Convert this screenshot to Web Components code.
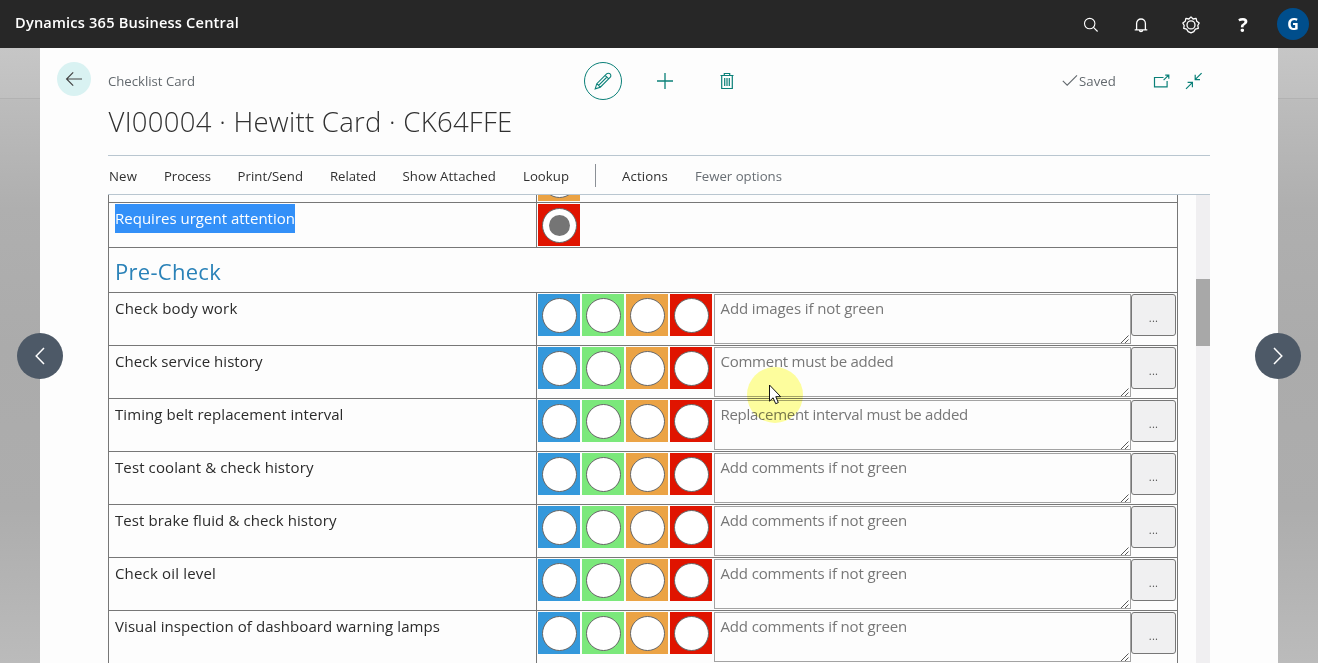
<!DOCTYPE html>
<html lang="en">
<head>
<meta charset="utf-8">
<title>Dynamics 365 Business Central</title>
<style>
html,body{margin:0;height:100%;overflow:hidden}
body{font-family:"Open Sans","Noto Sans",sans-serif;background:#b0b0b0}
</style>
</head>
<body>
<bc-app></bc-app>
<script>
class Base extends HTMLElement {
  constructor(){ super(); this.attachShadow({mode:'open'}); }
  connectedCallback(){ this.shadowRoot.innerHTML = this.render(); if(this.after) this.after(); }
}
/* Single-line label whose tracking is adjusted to fill the given width. */
customElements.define('bc-text', class extends Base {
  render(){ return `<style>:host{display:block;flex:none;white-space:nowrap;width:${this.getAttribute('w')}px}span{display:inline-block}</style><span><slot></slot></span>`; }
  after(){
    const s = this.shadowRoot.querySelector('span'), n = this.textContent.length;
    const gap = (+this.getAttribute('w') - s.getBoundingClientRect().width) / n;
    s.style.letterSpacing = gap.toFixed(3) + 'px';
  }
});
const ICONS = {
  search:[16,16,'<circle cx="6.7" cy="6.6" r="5.2"/><path d="M10.5 10.4 14.6 14.5"/>'],
  bell:[14,16,'<path d="M2.6 12.6V6.4a4.4 4.4 0 0 1 8.8 0v6.2M.7 12.8h12.6M5.4 13a1.6 1.6 0 0 0 3.2 0" stroke-width="1.3"/>'],
  gear:[18,18,'<path d="M9 .9 11.1 3 14.1 2.4 14.8 5.3 17.2 7 15.8 9.5 16.3 12.4 13.4 13.1 11.8 15.6 9 16.9 6.2 15.6 4.6 13.1 1.7 12.4 2.2 9.5.8 7 3.2 5.3 3.9 2.4 6.9 3Z" stroke-linejoin="round" stroke-width="1.3"/><circle cx="9" cy="8.9" r="4" stroke-width="1.3"/>'],
  back:[18,16,'<path d="M17 8H1.6M8.2 1.4 1.6 8l6.6 6.6" stroke-width="1.2"/>'],
  pencil:[18,18,'<path d="M1.2 16.8 2.8 11.7 12.6 1.9a2.1 2.1 0 0 1 3.5 3.5L6.3 15.2Z M2.8 11.7l3.5 3.5M11.2 3.3l3.5 3.5M4.6 13.4l8.4-8.4" stroke-width="1.1"/>'],
  plus:[18,18,'<path d="M9 1v16M1 9h16" stroke-width="1.3"/>'],
  trash:[14,18,'<path d="M.5 3.5h13M4.3 3.3V1.5h5.4v1.8M1.7 3.7v12.8h10.6V3.7M4.7 6v8M7 6v8M9.3 6v8" stroke-width="1.2"/>'],
  check:[16,13,'<path d="M.8 6.8 5.2 11.2 15 1.4"/>'],
  popout:[18,14,'<path d="M10.5 3.5H1.5v9.3h12.6V7M10.6 6.2 15.6 1.2M12.2 1.2h3.6V4.8" stroke-width="1.2"/>'],
  shrink:[18,18,'<path d="M16.6 1.2 10.6 7.2M10.2 2.8v4.8H15M1 16.8l6-6M2.6 10.4h4.8v4.8" stroke-width="1.2"/>'],
  left:[10,18,'<path d="M9 1 1.2 9 9 17" stroke-width="1.5"/>'],
  right:[10,18,'<path d="M1 1 8.8 9 1 17" stroke-width="1.5"/>'],
  grip:[10,10,'<path d="M1 9 8.5 1.5M5 9 8.5 5.5" stroke-width=".9"/>']
};
customElements.define('bc-icon', class extends Base {
  render(){ const [w,h,p] = ICONS[this.getAttribute('name')];
    return `<style>:host{display:block;flex:none;width:${w}px;height:${h}px}svg{display:block}</style><svg width="${w}" height="${h}" viewBox="0 0 ${w} ${h}" fill="none" stroke="currentColor" stroke-width="1.1">${p}</svg>`; }
});
customElements.define('bc-topbar', class extends Base {
  render(){ return `<style>
    :host{display:flex;height:48px;background:#272727;color:#fff;box-sizing:border-box;padding:0 9px 0 15px}
    .t{font-weight:600;font-size:14.6px;line-height:20px;padding-top:12px;flex:1}
    .i{display:flex;align-items:center;height:50px}
    .q{font-weight:700;font-size:20px;line-height:26px;margin:0 28px 0 37px;width:12px;text-align:center}
    .a{width:32px;height:32px;border-radius:50%;background:#004e8c;font-weight:700;font-size:16px;line-height:32px;text-align:center;margin-top:-2px}
    </style><div class="t"><bc-text w="224">Dynamics 365 Business Central</bc-text></div>
    <div class="i"><bc-icon name="search" style="margin-right:35px"></bc-icon><bc-icon name="bell" style="margin-right:34px"></bc-icon><bc-icon name="gear"></bc-icon><div class="q">?</div><div class="a">G</div></div>`; }
});
customElements.define('bc-caption', class extends Base {
  render(){ return `<style>
    :host{display:flex;height:56px;color:#0a8078;align-items:flex-start}
    .b{width:34px;height:34px;border-radius:50%;background:#d9f2f2;color:#444;display:grid;place-items:center;margin:14px 17px 0 17px}
    .c{font-size:13.2px;line-height:20px;color:#63696e;margin:23px 389px 0 0}
    .e{width:36px;height:36px;border:1px solid #0a8078;border-radius:50%;display:grid;place-items:center;margin:14px 34px 0 0}
    .s{display:flex;font-size:13.2px;line-height:20px;color:#63696e;margin:23px 37px 0 0}
    </style>
    <div class="b"><bc-icon name="back"></bc-icon></div>
    <div class="c"><bc-text w="87">Checklist Card</bc-text></div>
    <div class="e"><bc-icon name="pencil"></bc-icon></div>
    <bc-icon name="plus" style="margin:24px 46px 0 0"></bc-icon>
    <bc-icon name="trash" style="margin:24px 328px 0 0"></bc-icon>
    <div class="s"><bc-icon name="check" style="margin:3px 1px 0 0"></bc-icon><bc-text w="37">Saved</bc-text></div>
    <bc-icon name="popout" style="margin:26px 14px 0 0"></bc-icon>
    <bc-icon name="shrink" style="margin:24px 0 0"></bc-icon>`; }
});
customElements.define('bc-actions', class extends Base {
  render(){
    const a=[['New',28,27],['Process',47,26.5],['Print/Send',65.5,27],['Related',46,26.5],['Show Attached',93.5,27],['Lookup',46,26]];
    return `<style>:host{display:flex;align-items:center;height:37px;padding-top:1px;padding-left:1px;border:solid #b9c6d0;border-width:1px 0;font-size:13.2px;color:#303030;line-height:20px}
    i{width:1px;height:23px;background:#8b9096;margin-right:26px;margin-top:-1px}.f{color:#686e74}</style>`+
    a.map(([t,w,m])=>`<bc-text w="${w}" style="margin-right:${m}px">${t}</bc-text>`).join('')+
    `<i></i><bc-text w="46" style="margin-right:27px">Actions</bc-text><bc-text class="f" w="87">Fewer options</bc-text>`; }
});
customElements.define('bc-choice', class extends Base {
  render(){ return `<style>:host{display:block;flex:none;box-sizing:border-box;width:42px;height:42px;padding:4px 0 0 4px;background:${this.getAttribute('color')}}
    div{box-sizing:border-box;width:35px;height:35px;border:1px solid #666;border-radius:50%;background:#fff;display:grid;place-items:center}
    b{width:21px;height:21px;border-radius:50%;background:#757575}</style><div>${this.hasAttribute('checked')?'<b></b>':''}</div>`; }
});
customElements.define('bc-note', class extends Base {
  render(){ return `<style>:host{display:block;flex:none;position:relative;box-sizing:border-box;width:417px;height:50px;border:1px solid #a3a3a3;font-size:15px;line-height:22px;color:#777;padding:2px 0 0 5.5px;background:#fdfdfd}
    bc-icon{position:absolute;right:0;bottom:-1px;color:#444}</style><slot></slot><bc-icon name="grip"></bc-icon>`; }
});
customElements.define('bc-more', class extends Base {
  render(){ return `<style>:host{display:block;flex:none;box-sizing:border-box;width:45px;height:42px;border:1px solid #777;border-radius:3px;background:#f0f0f1;color:#555;font-size:11px;line-height:46px;text-align:center;letter-spacing:.3px}</style>...`; }
});
customElements.define('bc-row', class extends Base {
  render(){ return `<style>:host{display:flex;box-sizing:border-box;height:${this.getAttribute('h')}px;border-top:1px solid #777}
    .l{box-sizing:border-box;width:428px;padding:4px 0 0 6px;border-right:1px solid #777;font-size:15px;line-height:22px;color:#2b2b2b;flex:none}
    .r{display:flex;gap:2px;padding:1px 0 0 1px;align-items:flex-start}</style>
    <div class="l"><slot name="label"></slot></div><div class="r"><slot></slot></div>`; }
});
customElements.define('bc-section', class extends Base {
  render(){ return `<style>:host{display:block;box-sizing:border-box;height:45px;border-top:1px solid #777;padding:7px 0 0 6px;font-size:22px;line-height:32px;color:#2a82b8}</style><slot></slot>`; }
});
customElements.define('bc-checklist', class extends Base {
  render(){
    const rows=[['Check body work',122.5,'Add images if not green',163.5],['Check service history',147.5,'Comment must be added',173],
     ['Timing belt replacement interval',228.5,'Replacement interval must be added',247.5],['Test coolant &amp; check history',198.5,'Add comments if not green',186.5],
     ['Test brake fluid &amp; check history',221.5,'Add comments if not green',186.5],['Check oil level',101,'Add comments if not green',186.5],
     ['Visual inspection of dashboard warning lamps',325,'Add comments if not green',186.5]];
    const c=['#3498db','#7be87b','#eba345','#e01400'].map(x=>`<bc-choice color="${x}"></bc-choice>`).join('');
    return `<style>:host{display:flex;height:469px;overflow:hidden}
     .t{box-sizing:border-box;width:1070px;border:solid #777;border-width:0 1px;margin-top:-38px;flex:none;height:520px}
     .s{margin-left:18px;width:14px;background:#f0eff1;padding-top:84px;box-sizing:border-box}
     .s div{height:67px;background:#a8a8a8}
     .sel{background:#3390f8;color:#fff;line-height:29px;margin-top:-3px;font-weight:500}
     .g{display:flex}
    </style><div class="t">
     <bc-row h="45"><bc-choice color="#eba345"></bc-choice></bc-row>
     <bc-row h="45"><bc-text slot="label" class="sel" w="180">Requires urgent attention</bc-text><bc-choice color="#e01400" checked></bc-choice></bc-row>
     <bc-section><bc-text w="106">Pre-Check</bc-text></bc-section>
     ${rows.map(r=>`<bc-row h="53"><bc-text slot="label" w="${r[1]}">${r[0]}</bc-text>${c}<div class="g"><bc-note><bc-text w="${r[3]}">${r[2]}</bc-text></bc-note><bc-more></bc-more></div></bc-row>`).join('')}
    </div><div class="s"><div></div></div>`; }
});
customElements.define('bc-nav', class extends Base {
  render(){ return `<style>:host{position:absolute;top:333px;width:46px;height:46px;border-radius:50%;background:#4d5967;color:#fff;display:grid;place-items:center}</style><bc-icon name="${this.getAttribute('dir')}"></bc-icon>`; }
});
customElements.define('bc-pointer', class extends Base {
  render(){ return `<style>:host{position:absolute;left:747px;top:367px;width:56px;height:56px;mix-blend-mode:multiply}
   div{width:56px;height:56px;border-radius:50%;background:#ffff9e}</style><div></div>`; }
});
customElements.define('bc-cursor', class extends Base {
  render(){ return `<style>:host{position:absolute;left:769px;top:384px}svg{display:block}</style><svg width="13" height="21" viewBox="0 0 13 21"><path d="M.5 1v16.2l3.6-3.4 2.6 5.9 2.6-1.1-2.5-5.9h4.9Z" fill="#fff" stroke="#111"/></svg>`; }
});
customElements.define('bc-app', class extends Base {
  render(){ return `<style>
    :host{display:flex;flex-direction:column;height:663px;width:1318px;position:relative;overflow:hidden}
    .m{display:flex;flex:1;min-height:0}
    .side{width:40px;flex:none;background:linear-gradient(#c6c6c6 0,#c0c0c0 50px,#bcbcbc 52px,#afafaf 160px,#ababab 300px,#adadad 460px,#bbb)}
    .side::before{content:"";display:block;height:50px;border-bottom:1px solid #b2b2b2}
    .p{width:1238px;background:#fdfdfd;flex:none}
    .title{font-weight:300;font-size:27.5px;line-height:40px;color:#303030;padding:1px 0 0 68.5px;margin-top:-3px;height:53px}
    .w{margin:0 68px}
    </style><bc-topbar></bc-topbar><div class="m"><div class="side"></div><div class="p"><bc-caption></bc-caption>
    <div class="title"><bc-text w="404">VI00004 · Hewitt Card · CK64FFE</bc-text></div>
    <div class="w"><bc-actions></bc-actions><bc-checklist></bc-checklist></div></div><div class="side"></div></div>
    <bc-nav dir="left" style="left:17px"></bc-nav><bc-nav dir="right" style="left:1255px"></bc-nav><bc-pointer></bc-pointer><bc-cursor></bc-cursor>`; }
});
</script>
</body>
</html>
